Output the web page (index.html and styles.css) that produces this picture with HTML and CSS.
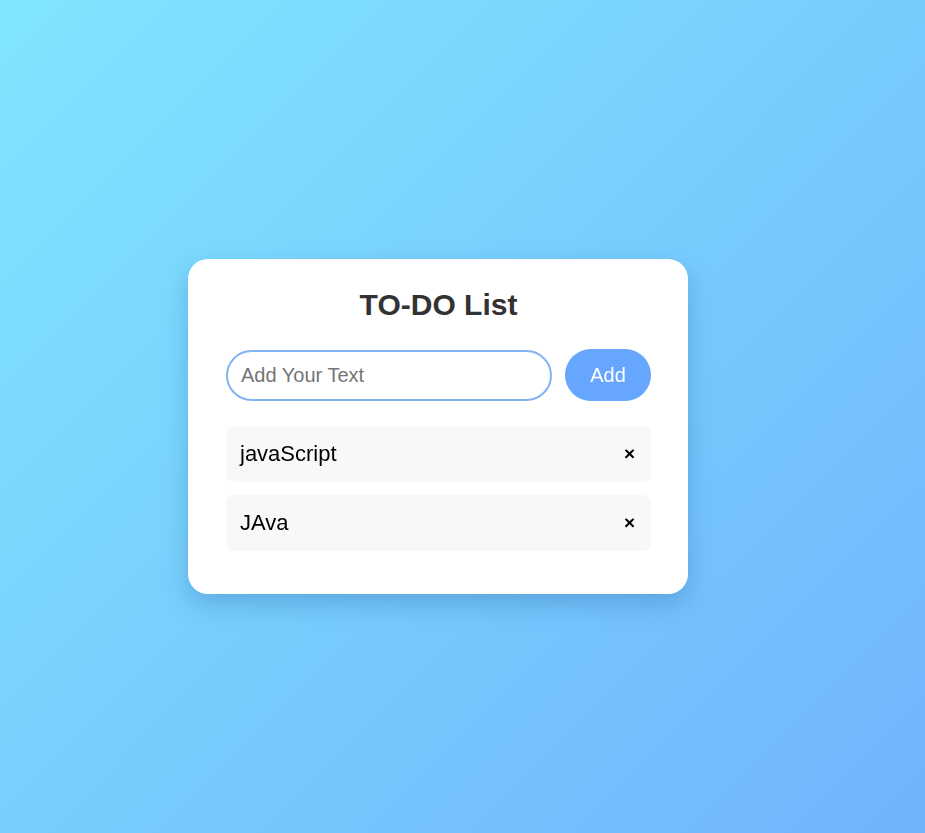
FILE: index.html
```html
<!DOCTYPE html>
<html lang="en">
<head>
<meta charset="UTF-8">
<title>TO-DO List</title>
<link rel="stylesheet" href="styles.css">
</head>
<body>
<div class="page">
  <div class="card">
    <h2 class="title">TO-DO List</h2>
    <div class="row">
      <input class="field" type="text" placeholder="Add Your Text" autofocus>
      <button class="add">Add</button>
    </div>
    <ul class="list">
      <li class="item"><span class="label">javaScript</span><span class="remove">×</span></li>
      <li class="item"><span class="label">JAva</span><span class="remove">×</span></li>
    </ul>
  </div>
</div>
</body>
</html>
```
FILE: styles.css
```css
html, body {
  margin: 0;
  padding: 0;
  height: 100%;
}
body {
  font-family: "Liberation Sans", Arial, sans-serif;
  background: linear-gradient(135deg, #81e6ff 0%, #70b4fc 100%);
}
.page {
  box-sizing: border-box;
  height: 100%;
  display: flex;
  align-items: center;
  justify-content: center;
  padding: 20px 49px 0 0;
}
.card {
  box-sizing: border-box;
  width: 500px;
  background: #fff;
  border-radius: 20px;
  padding: 30px 37px 43px 38px;
  box-shadow: 0 10px 25px rgba(40, 110, 170, 0.35);
}
.title {
  margin: 0 0 28px;
  text-align: center;
  font-size: 30px;
  line-height: 32px;
  font-weight: bold;
  color: #333;
}
.row {
  display: flex;
  gap: 13px;
  align-items: center;
}
.field {
  flex: 1;
  box-sizing: border-box;
  height: 51px;
  border: 2px solid #82b4f2;
  border-radius: 26px;
  padding: 0 13px;
  font-family: "Liberation Sans", Arial, sans-serif;
  font-size: 20px;
  color: #333;
  outline: none;
}
.field::placeholder {
  color: #757575;
}
.add {
  width: 86px;
  height: 52px;
  border: none;
  border-radius: 26px;
  background: #66a6ff;
  color: #fff;
  font-family: "Liberation Sans", Arial, sans-serif;
  font-size: 20px;
}
.list {
  list-style: none;
  margin: 25px 0 0;
  padding: 0;
  display: flex;
  flex-direction: column;
  gap: 13px;
}
.item {
  display: flex;
  align-items: center;
  justify-content: space-between;
  height: 56px;
  padding: 0 16px 0 14px;
  background: #f8f8f8;
  border-radius: 8px;
  font-size: 22px;
  color: #000;
}
.remove {
  font-size: 19px;
  font-weight: bold;
  color: #000;
}
```
